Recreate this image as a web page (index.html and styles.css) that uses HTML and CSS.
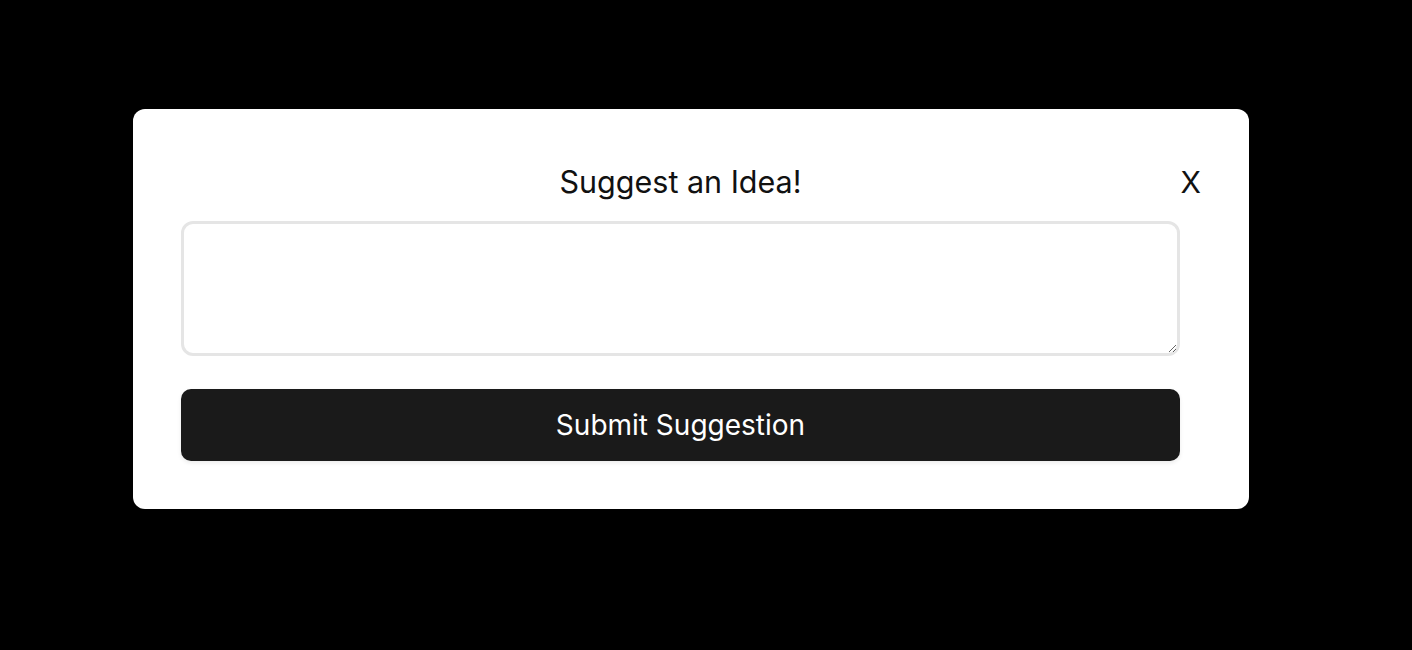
FILE: index.html
```html
<!DOCTYPE html>
<html lang="en">
<head>
<meta charset="utf-8">
<title>Suggest an Idea</title>
<link rel="stylesheet" href="styles.css">
</head>
<body>
<div class="overlay">
  <div class="modal">
    <div class="modal-header">
      <h2 class="modal-title">Suggest an Idea!</h2>
    </div>
    <button class="close-btn" type="button">X</button>
    <textarea class="suggestion-input"></textarea>
    <button class="submit-btn" type="button">Submit Suggestion</button>
  </div>
</div>
</body>
</html>
```

FILE: styles.css
```css
html, body {
  margin: 0;
  padding: 0;
  background: #000;
  font-family: Inter, "Noto Sans", "Liberation Sans", sans-serif;
}

.overlay {
  width: 1412px;
  height: 650px;
  box-sizing: border-box;
  padding: 109px 0 0 133px;
}

.modal {
  position: relative;
  width: 1116px;
  height: 400px;
  box-sizing: border-box;
  padding: 55px 69px 48px 48px;
  background: #fff;
  border-radius: 12px;
  display: flex;
  flex-direction: column;
}

.modal-header {
  display: flex;
  justify-content: center;
  margin-bottom: 21px;
}

.modal-title {
  margin: 0;
  font-size: 30.5px;
  line-height: 36px;
  font-weight: 400;
  color: #111;
}

.close-btn {
  position: absolute;
  top: 55px;
  right: 48px;
  border: none;
  background: none;
  padding: 0;
  font-family: inherit;
  font-size: 30px;
  line-height: 36px;
  color: #111;
  cursor: pointer;
}

.suggestion-input {
  display: block;
  width: 100%;
  height: 135px;
  box-sizing: border-box;
  border: 3px solid #e5e5e5;
  border-radius: 12px;
  margin: 0 0 33px 0;
  padding: 10px 14px;
  font-family: inherit;
  font-size: 18px;
  outline: none;
}

.submit-btn {
  display: block;
  width: 100%;
  height: 72px;
  border: none;
  border-radius: 10px;
  background: #1a1a1a;
  color: #fff;
  font-family: inherit;
  font-size: 28px;
  box-shadow: 0 2px 4px rgba(0, 0, 0, 0.08);
  cursor: pointer;
}
```
